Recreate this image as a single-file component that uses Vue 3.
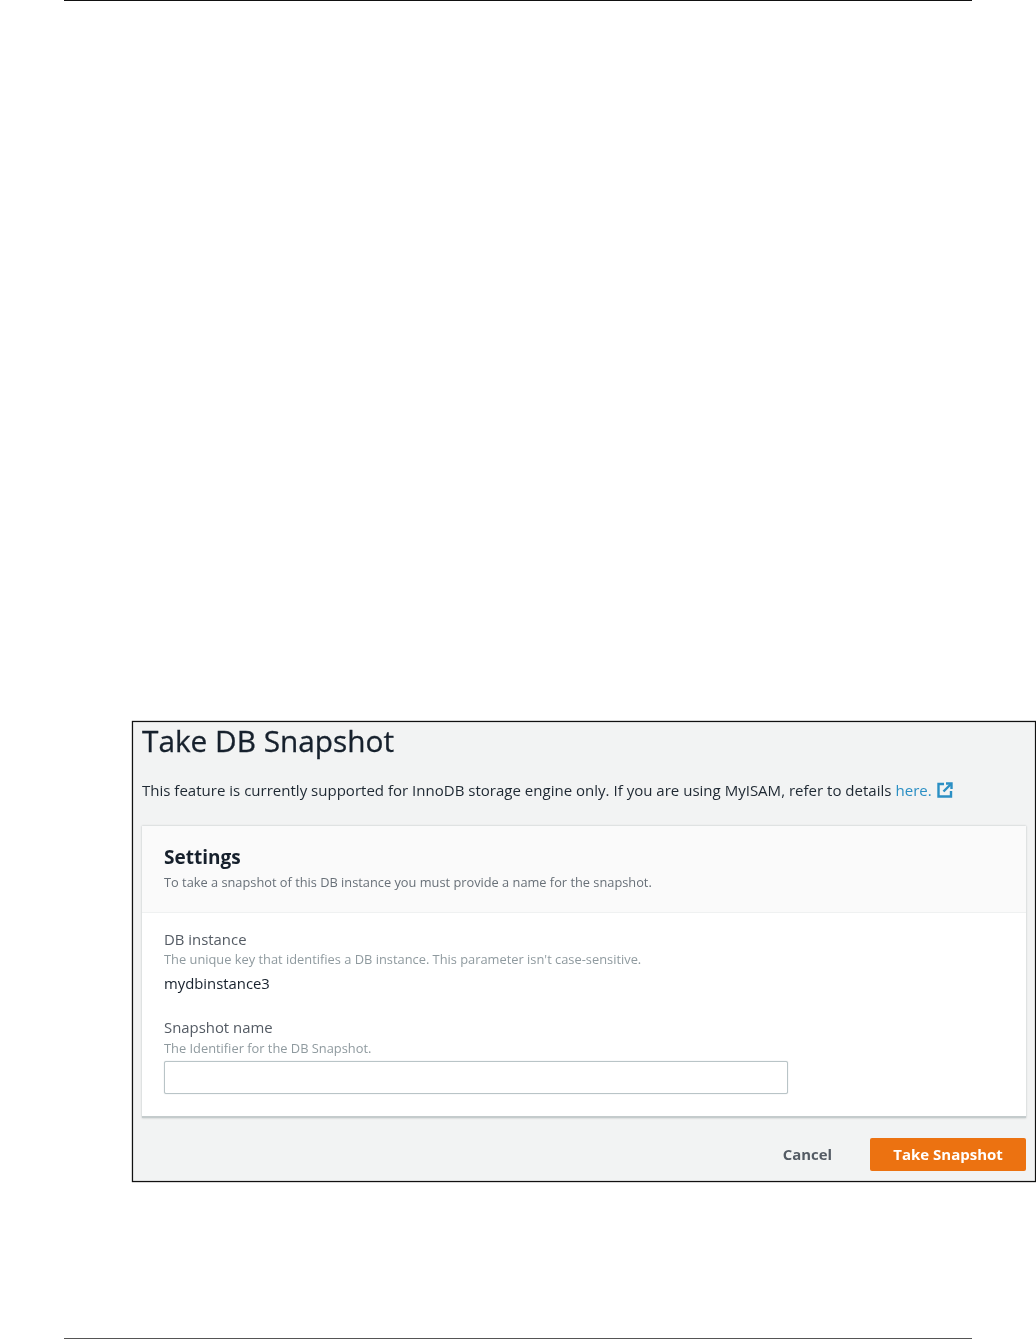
<template>
  <div class="page">
    <div class="rule top-rule"></div>

    <section class="dialog">
      <h1 class="title soft">Take DB Snapshot</h1>
      <p class="notice soft">
        This feature is currently supported for InnoDB storage engine only. If you are using MyISAM, refer to details
        <span class="link">here.</span>
        <svg class="ext-icon" viewBox="0 0 16 16" fill="none">
          <path d="M7 2H1.5v12.5H14V9" stroke="#2b8fc4" stroke-width="2.4" />
          <path d="M6.5 9.5L14 2" stroke="#2b8fc4" stroke-width="2.4" />
          <path d="M9 1.5h5.5V7" stroke="#2b8fc4" stroke-width="2.4" />
        </svg>
      </p>

      <div class="card">
        <div class="card-head">
          <h2 class="card-title soft">Settings</h2>
          <p class="card-desc soft">To take a snapshot of this DB instance you must provide a name for the snapshot.</p>
        </div>
        <div class="card-body">
          <div class="field">
            <div class="label soft">DB instance</div>
            <div class="hint soft">The unique key that identifies a DB instance. This parameter isn't case-sensitive.</div>
            <div class="value soft">mydbinstance3</div>
          </div>
          <div class="field name-field">
            <div class="label soft">Snapshot name</div>
            <div class="hint soft">The Identifier for the DB Snapshot.</div>
            <input class="input" type="text" />
          </div>
        </div>
      </div>

      <div class="actions">
        <span class="cancel soft">Cancel</span>
        <button class="submit" type="button"><span class="soft">Take Snapshot</span></button>
      </div>
    </section>

    <div class="rule bottom-rule"></div>
  </div>
</template>

<script setup>
</script>

<style scoped>
.page {
  width: 1036px;
  height: 1339px;
  overflow: hidden;
  background: #fff;
  font-family: "Open Sans", "Liberation Sans", sans-serif;
  display: flex;
  flex-direction: column;
}

/* the reference is an upscaled screenshot, text is slightly soft */
.soft {
  filter: blur(0.35px);
}

.rule {
  width: 908px;
  margin-left: 64px;
  height: 1px;
}

.top-rule {
  background: #111;
}

.bottom-rule {
  background: #555;
  margin-top: 156px;
}

.dialog {
  box-sizing: border-box;
  width: 904px;
  height: 461px;
  margin: 720px 0 0 132px;
  border: 1px solid #111;
  box-shadow: 0 0 1px #111, inset 0 0 1px #111;
  background: #f2f3f3;
  padding: 0 9px;
}

.title {
  margin: 0;
  font-size: 29.8px;
  line-height: 38px;
  font-weight: 400;
  color: #16202c;
  -webkit-text-stroke: 0.3px #16202c;
}

.notice {
  margin: 0;
  padding-top: 20px;
  font-size: 15.04px;
  line-height: 20px;
  color: #1f2933;
  white-space: nowrap;
  display: flex;
  align-items: center;
  gap: 4px;
}

.link {
  color: #2b8fc4;
}

.ext-icon {
  width: 16px;
  height: 16px;
  margin-left: 1px;
}

.card {
  margin-top: 26px;
  background: #fff;
  border-bottom: 2px solid #c4cbcc;
  box-shadow: 0 0 2px rgba(0, 28, 36, 0.25);
  height: 292px;
  box-sizing: border-box;
}

.card-head {
  box-sizing: border-box;
  height: 87px;
  padding: 19px 22px 0;
  background: #fafafa;
  border-bottom: 1px solid #eff1f1;
}

.card-title {
  margin: 0;
  font-size: 19px;
  line-height: 25px;
  font-weight: 700;
  color: #16202c;
}

.card-desc {
  margin: 4px 0 0;
  font-size: 12.8px;
  line-height: 16px;
  color: #687078;
}

.card-body {
  padding: 17px 22px 0;
}

.label {
  font-size: 14.9px;
  line-height: 18px;
  color: #545b64;
}

.hint {
  margin-top: 3px;
  font-size: 12.85px;
  line-height: 16px;
  color: #8f9a9f;
}

.value {
  margin-top: 7px;
  font-size: 14.85px;
  line-height: 18px;
  color: #16202c;
  font-weight: 500;
}

.name-field {
  margin-top: 26px;
}

.name-field .hint {
  margin-top: 4px;
}

.input {
  display: block;
  box-sizing: border-box;
  width: 624px;
  height: 33px;
  margin-top: 5px;
  border: 1px solid #b9c4c7;
  box-shadow: 0 0 1px #b9c4c7;
  border-radius: 2px;
  background: #fff;
}

.actions {
  display: flex;
  justify-content: flex-end;
  align-items: center;
  margin-top: 20px;
}

.cancel {
  font-size: 14.9px;
  font-weight: 700;
  color: #545b64;
  margin-right: 38px;
  margin-bottom: 2px;
}

.submit {
  width: 156px;
  height: 33px;
  padding: 0 0 2px;
  border: 0;
  border-radius: 2px;
  background: #ec7211;
  color: #fff;
  font-family: inherit;
  font-size: 15px;
  font-weight: 700;
}

.submit span {
  display: block;
}
</style>
